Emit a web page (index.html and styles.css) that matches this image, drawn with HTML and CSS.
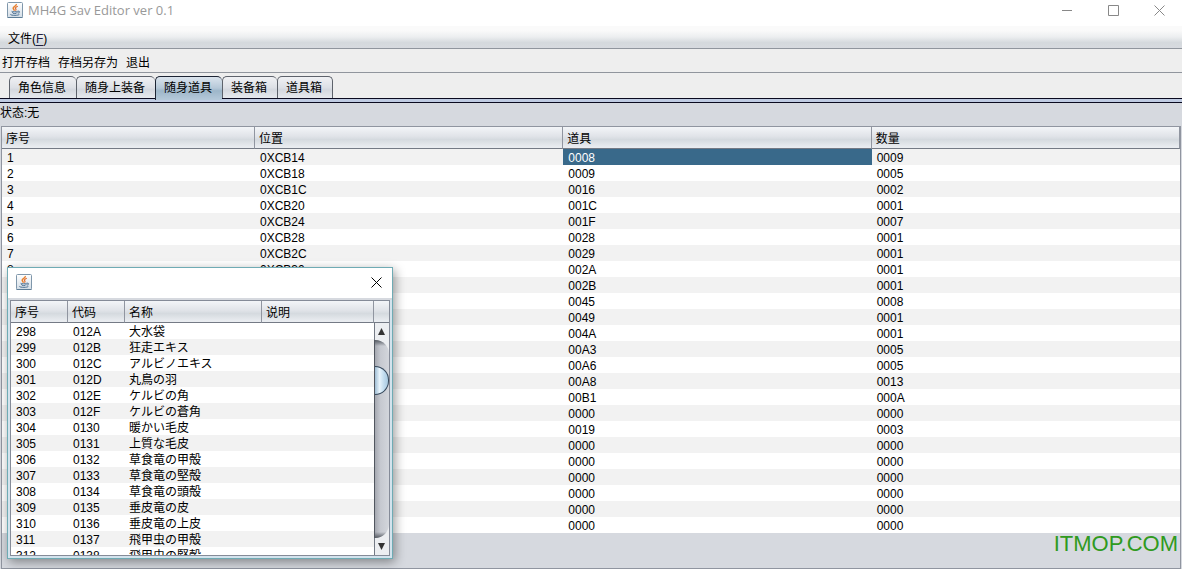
FILE: index.html
```html
<!DOCTYPE html>
<html lang="zh-CN">
<head>
<meta charset="utf-8">
<title>MH4G Sav Editor ver 0.1</title>
<link rel="stylesheet" href="styles.css">
</head>
<body>
<svg class="defs" aria-hidden="true">
  <defs>
    <linearGradient id="cupBg" x1="0" y1="0" x2="0" y2="1"><stop offset="0" stop-color="#ffffff"/><stop offset="1" stop-color="#d3dde6"/></linearGradient>
    <symbol id="java" viewBox="0 0 16 16">
      <rect x="0.5" y="0.5" width="15" height="15" rx="1" fill="url(#cupBg)" stroke="#7f97ab"/>
      <path d="M0.5 15.5H15.5" stroke="#5d7d97"/>
      <path d="M9.3 2C9.8 4 6 4.4 6.2 6.2C6.3 7.2 7.3 7.6 7.3 8.8" fill="none" stroke="#e8802c" stroke-width="1.5"/>
      <path d="M10.8 4.3C8.6 5.2 8 5.9 8.8 6.9C9.3 7.6 9 8.1 8.5 8.7" fill="none" stroke="#e06a2c" stroke-width="1.2"/>
      <path d="M4.6 9.3C5 10 10 10 10.8 9.2M5.2 10.2C5.2 12 10 12 10.3 10.2M11 9.2C13.4 8.8 12.8 11 10.8 11.2M3.4 12.2C3 13.6 11.5 13.8 12.4 12.3" fill="none" stroke="#4a6f92" stroke-width="1"/>
    </symbol>
  </defs>
</svg>
<div class="app">
  <header class="titlebar">
    <svg class="java-icon" aria-hidden="true"><use href="#java"/></svg>
    <h1 class="title">MH4G Sav Editor ver 0.1</h1>
    <div class="window-controls">
      <button type="button" aria-label="最小化"><svg viewBox="0 0 11 11"><path d="M0 5.5H10"/></svg></button>
      <button type="button" aria-label="最大化"><svg viewBox="0 0 11 11"><path d="M0.5 0.5H10.5V10.5H0.5Z"/></svg></button>
      <button type="button" aria-label="关闭"><svg viewBox="0 0 11 11"><path d="M0.5 0.5L10.5 10.5M10.5 0.5L0.5 10.5"/></svg></button>
    </div>
  </header>
  <nav class="menubar"><button type="button">文件(<u>F</u>)</button></nav>
  <div class="toolbar">
    <button type="button">打开存档</button>
    <button type="button">存档另存为</button>
    <button type="button">退出</button>
  </div>
  <div class="tabs" role="tablist">
    <button type="button" class="tab" role="tab">角色信息</button>
    <button type="button" class="tab" role="tab">随身上装备</button>
    <button type="button" class="tab selected" role="tab" aria-selected="true">随身道具</button>
    <button type="button" class="tab" role="tab">装备箱</button>
    <button type="button" class="tab" role="tab">道具箱</button>
  </div>
  <main class="panel">
    <p class="status">状态:无</p>
    <div class="scrollpane">
      <table class="grid items">
        <thead><tr><th>序号</th><th>位置</th><th>道具</th><th>数量</th></tr></thead>
        <tbody>
          <tr><td>1</td><td>0XCB14</td><td class="active">0008</td><td>0009</td></tr>
          <tr><td>2</td><td>0XCB18</td><td>0009</td><td>0005</td></tr>
          <tr><td>3</td><td>0XCB1C</td><td>0016</td><td>0002</td></tr>
          <tr><td>4</td><td>0XCB20</td><td>001C</td><td>0001</td></tr>
          <tr><td>5</td><td>0XCB24</td><td>001F</td><td>0007</td></tr>
          <tr><td>6</td><td>0XCB28</td><td>0028</td><td>0001</td></tr>
          <tr><td>7</td><td>0XCB2C</td><td>0029</td><td>0001</td></tr>
          <tr><td>8</td><td>0XCB30</td><td>002A</td><td>0001</td></tr>
          <tr><td></td><td></td><td>002B</td><td>0001</td></tr>
          <tr><td></td><td></td><td>0045</td><td>0008</td></tr>
          <tr><td></td><td></td><td>0049</td><td>0001</td></tr>
          <tr><td></td><td></td><td>004A</td><td>0001</td></tr>
          <tr><td></td><td></td><td>00A3</td><td>0005</td></tr>
          <tr><td></td><td></td><td>00A6</td><td>0005</td></tr>
          <tr><td></td><td></td><td>00A8</td><td>0013</td></tr>
          <tr><td></td><td></td><td>00B1</td><td>000A</td></tr>
          <tr><td></td><td></td><td>0000</td><td>0000</td></tr>
          <tr><td></td><td></td><td>0019</td><td>0003</td></tr>
          <tr><td></td><td></td><td>0000</td><td>0000</td></tr>
          <tr><td></td><td></td><td>0000</td><td>0000</td></tr>
          <tr><td></td><td></td><td>0000</td><td>0000</td></tr>
          <tr><td></td><td></td><td>0000</td><td>0000</td></tr>
          <tr><td></td><td></td><td>0000</td><td>0000</td></tr>
          <tr><td></td><td></td><td>0000</td><td>0000</td></tr>
        </tbody>
      </table>
    </div>
  </main>
  <div class="watermark">ITMOP.COM</div>
  <section class="dialog" role="dialog" aria-label="道具列表">
    <header class="dialog-title">
      <svg class="java-icon" aria-hidden="true"><use href="#java"/></svg>
      <button type="button" class="dialog-close" aria-label="关闭"><svg viewBox="0 0 11 11"><path d="M0.5 0.5L10.5 10.5M10.5 0.5L0.5 10.5"/></svg></button>
    </header>
    <div class="dialog-body">
      <div class="list">
        <table class="grid codes">
          <thead><tr><th>序号</th><th>代码</th><th>名称</th><th>说明</th></tr></thead>
          <tbody>
            <tr><td>298</td><td>012A</td><td lang="ja">大水袋</td><td></td></tr>
            <tr><td>299</td><td>012B</td><td lang="ja">狂走エキス</td><td></td></tr>
            <tr><td>300</td><td>012C</td><td lang="ja">アルビノエキス</td><td></td></tr>
            <tr><td>301</td><td>012D</td><td lang="ja">丸鳥の羽</td><td></td></tr>
            <tr><td>302</td><td>012E</td><td lang="ja">ケルビの角</td><td></td></tr>
            <tr><td>303</td><td>012F</td><td lang="ja">ケルビの蒼角</td><td></td></tr>
            <tr><td>304</td><td>0130</td><td lang="ja">暖かい毛皮</td><td></td></tr>
            <tr><td>305</td><td>0131</td><td lang="ja">上質な毛皮</td><td></td></tr>
            <tr><td>306</td><td>0132</td><td lang="ja">草食竜の甲殻</td><td></td></tr>
            <tr><td>307</td><td>0133</td><td lang="ja">草食竜の堅殻</td><td></td></tr>
            <tr><td>308</td><td>0134</td><td lang="ja">草食竜の頭殻</td><td></td></tr>
            <tr><td>309</td><td>0135</td><td lang="ja">垂皮竜の皮</td><td></td></tr>
            <tr><td>310</td><td>0136</td><td lang="ja">垂皮竜の上皮</td><td></td></tr>
            <tr><td>311</td><td>0137</td><td lang="ja">飛甲虫の甲殻</td><td></td></tr>
            <tr><td>312</td><td>0138</td><td lang="ja">飛甲虫の堅殻</td><td></td></tr>
          </tbody>
        </table>
      </div>
      <div class="scrollbar">
        <div class="corner"></div>
        <button type="button" class="scroll-up" aria-label="向上滚动"><svg viewBox="0 0 14 17"><path d="M3 12L6.5 5L10 12Z"/></svg></button>
        <div class="track"><div class="thumb"></div></div>
        <button type="button" class="scroll-down" aria-label="向下滚动"><svg viewBox="0 0 14 17"><path d="M3 5L6.5 12L10 5Z"/></svg></button>
      </div>
    </div>
  </section>
</div>
</body>
</html>
```
FILE: styles.css
```css
* { box-sizing: border-box; }

body {
  margin: 0;
  font: 12px/16px "Liberation Sans", "Noto Sans CJK SC", sans-serif;
  color: #000;
  background: #fff;
}

button {
  margin: 0;
  padding: 0;
  border: 0;
  background: none;
  font: inherit;
  color: inherit;
}

svg { display: block; }
.defs { position: absolute; width: 0; height: 0; }

.app {
  position: relative;
  display: flex;
  flex-direction: column;
  height: 100vh;
  min-height: 560px;
  overflow: hidden;
}

/* Main window title */
.titlebar {
  display: flex;
  align-items: center;
  flex: none;
  height: 26px;
  padding: 0 0 6px 7px;
}
.java-icon { width: 16px; height: 16px; flex: none; }
.title {
  flex: 1;
  margin: 0 0 0 5px;
  font: 13px/16px "Open Sans", sans-serif;
  color: #999;
}
.window-controls { display: flex; }
.window-controls button { width: 46px; height: 20px; display: grid; place-items: center; }
.window-controls svg, .dialog-close svg { width: 11px; height: 11px; fill: none; stroke: #888; }

.menubar {
  flex: none;
  height: 23px;
  padding: 5px 8px 0;
  border-bottom: 1px solid #90959d;
  background: linear-gradient(#fafafa 20%, #eceef0 50%, #d5d9dd 75%, #d7dadf);
}
.menubar button, .toolbar button { display: block; line-height: 16px; }
.menubar u { color: #224; text-underline-offset: 2px; }

.toolbar {
  display: flex;
  align-items: center;
  gap: 8px;
  flex: none;
  height: 24px;
  padding: 4px 2px 0;
  border-bottom: 1px solid #90959d;
  background: #eee;
}

/* Tabs sit on a double rule that the selected tab opens into */
.tabs {
  display: flex;
  align-items: flex-end;
  flex: none;
  height: 30px;
  padding: 0 9px 4px;
  border-bottom: 1px solid #0a0a20;
  background: linear-gradient(#eee 25px, #0a0a20 25px, #0a0a20 26px, #bfcbe2 26px);
}
.tab {
  height: 22px;
  padding: 1px 10px 0 8px;
  border: solid #5d626b;
  border-width: 1px 0 0 1px;
  border-radius: 5px 5px 0 0;
  background: linear-gradient(#f0f1f4, #dde0e6 50%, #d4d8df 60%, #e6e9ee);
}
.tabs { align-items: flex-start; padding-top: 3px; }
.tab:last-child { border-right-width: 1px; }
.tab.selected {
  height: 24px;
  padding-bottom: 2px;
  border-color: #1c2434;
  background: linear-gradient(#dbe4ed, #b6c8d8 48%, #9db6c9 60%, #b5c9da);
}

.panel {
  display: flex;
  flex-direction: column;
  flex: 1;
  min-height: 0;
  padding: 2px 1px 0;
  background: #d6d9df;
}
.status { margin: 0 0 5px -1px; line-height: 16px; }
.scrollpane {
  flex: 1;
  min-height: 0;
  border: 1px solid #9095a0;
  overflow: hidden;
}

/* Shared data tables */
.grid {
  width: 100%;
  table-layout: fixed;
  border-collapse: separate;
  border-spacing: 0;
}
.grid th {
  height: 22px;
  padding: 2px 4px 0;
  border-right: 1px solid #9095a0;
  border-bottom: 1px solid #747a85;
  background: linear-gradient(#f3f5f8, #e0e3e8 45%, #d5dadf 60%, #e9ecf0 95%);
  font-weight: normal;
  text-align: left;
  line-height: 16px;
}
.grid td {
  height: 16px;
  padding: 2px 5px 0;
  background: #fff;
  line-height: 14px;
  white-space: nowrap;
}
.grid td:lang(ja) {
  padding-left: 4px;
  font-family: "Liberation Sans", "Noto Sans CJK JP", sans-serif;
}
.items th:first-child { width: 253px; }
.items tbody tr:nth-child(odd) td { background: #f2f2f2; }
.items tbody tr td.active { background: #39698a; color: #fff; }
.codes tbody tr:nth-child(even) td { background: #f2f2f2; }
.codes th:nth-child(1), .codes th:nth-child(2) { width: 57px; }
.codes th:nth-child(3) { width: 137px; }

.watermark {
  position: absolute;
  right: 4px;
  bottom: 12px;
  font-size: 22px;
  line-height: 26px;
  color: #2f9a20;
}

/* Floating item list */
.dialog {
  position: absolute;
  left: 7px;
  top: 267px;
  display: flex;
  flex-direction: column;
  width: 386px;
  height: 292px;
  border: 1px solid #6fabb4;
  background: #d3e3ed;
  box-shadow: 2px 3px 10px rgba(0, 0, 0, 0.4);
}
.dialog-title {
  display: flex;
  align-items: center;
  justify-content: space-between;
  flex: none;
  height: 32px;
  padding: 0 10px 2px 8px;
  border-bottom: 2px solid #d6d9df;
  background: #fff;
}
.dialog-close svg { stroke: #000; }
.dialog-body {
  display: flex;
  flex: 1;
  min-height: 0;
  margin: 0 2px 2px;
  border: 1px solid #858b98;
}
.list { flex: 1; min-width: 0; overflow: hidden; background: #fff; }

.scrollbar { display: flex; flex-direction: column; width: 15px; flex: none; background: #eceef1; }
.corner {
  height: 22px;
  flex: none;
  border-bottom: 1px solid #747a85;
  background: linear-gradient(#f3f5f8, #e0e3e8 45%, #d5dadf 60%, #e9ecf0 95%);
}
.scroll-up, .scroll-down {
  height: 17px;
  flex: none;
  border-left: 1px solid #747a85;
}
.scroll-up svg, .scroll-down svg { width: 14px; height: 17px; fill: #333; }
.track {
  flex: 1;
  padding-top: 26px;
  border-left: 1px solid #51565f;
  border-radius: 0 14px 14px 0;
  background:
    linear-gradient(#555a62, rgba(85, 90, 98, 0) 6px),
    linear-gradient(0deg, #555a62, rgba(85, 90, 98, 0) 6px),
    linear-gradient(90deg, #a5a8b0, #c6c9d0 40%, #d3d6dc);
}
.thumb {
  height: 29px;
  border: 1px solid #35485c;
  border-left: 0;
  border-radius: 0 15px 15px 0;
  background: linear-gradient(90deg, #9fbdd4, #e8f4fc 35%, #c0dbee 70%, #a9c9e0);
}
```
